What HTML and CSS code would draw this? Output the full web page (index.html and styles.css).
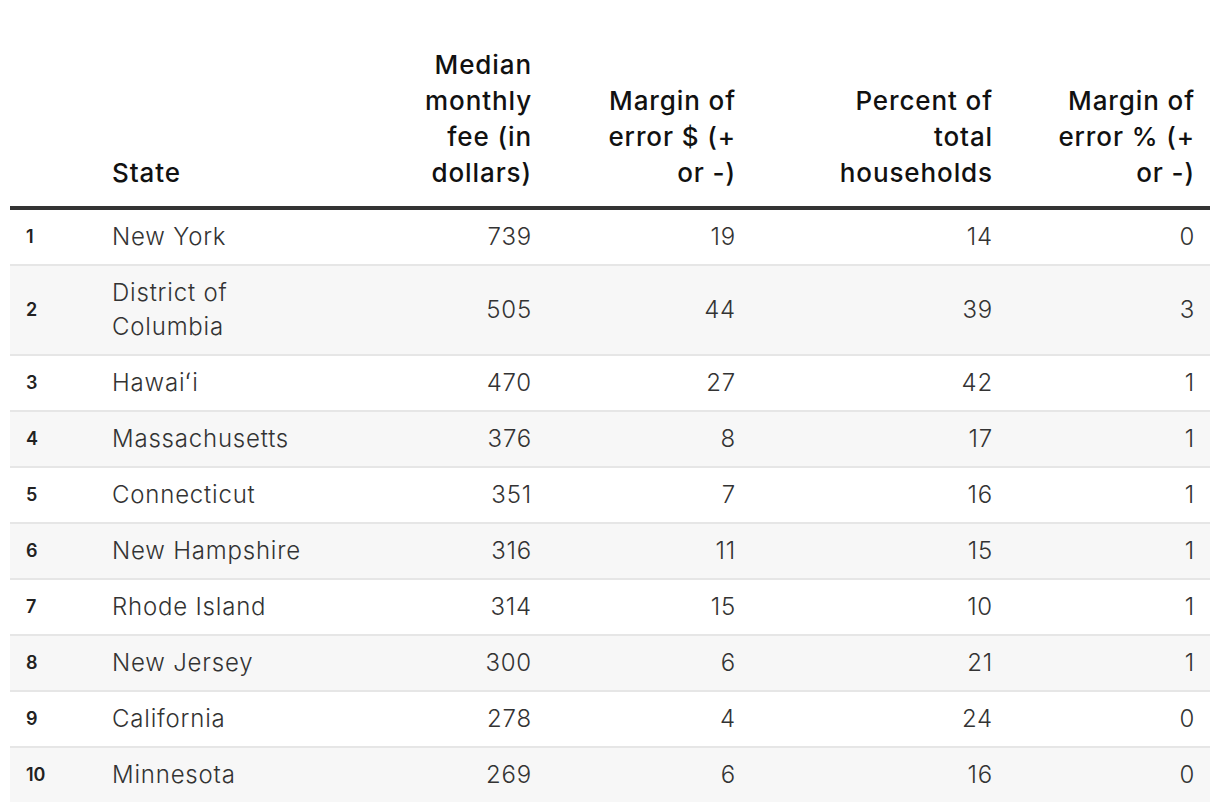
FILE: index.html
```html
<!DOCTYPE html>
<html lang="en">
<head>
<meta charset="utf-8">
<title>Median monthly fee by state</title>
<link rel="stylesheet" href="styles.css">
</head>
<body>
<table class="data">
  <colgroup>
    <col class="c-idx">
    <col class="c-state">
    <col class="c-fee">
    <col class="c-moe">
    <col class="c-pct">
    <col class="c-moep">
  </colgroup>
  <thead>
    <tr>
      <th class="idx"></th>
      <th class="left">State</th>
      <th>Median<br>monthly<br>fee (in<br>dollars)</th>
      <th>Margin of<br>error $ (+<br>or -)</th>
      <th>Percent of<br>total<br>households</th>
      <th>Margin of<br>error % (+<br>or -)</th>
    </tr>
  </thead>
  <tbody>
    <tr><td class="idx">1</td><td class="left">New York</td><td>739</td><td>19</td><td>14</td><td>0</td></tr>
    <tr><td class="idx">2</td><td class="left">District of<br>Columbia</td><td>505</td><td>44</td><td>39</td><td>3</td></tr>
    <tr><td class="idx">3</td><td class="left">Hawaiʻi</td><td>470</td><td>27</td><td>42</td><td>1</td></tr>
    <tr><td class="idx">4</td><td class="left">Massachusetts</td><td>376</td><td>8</td><td>17</td><td>1</td></tr>
    <tr><td class="idx">5</td><td class="left">Connecticut</td><td>351</td><td>7</td><td>16</td><td>1</td></tr>
    <tr><td class="idx">6</td><td class="left">New Hampshire</td><td>316</td><td>11</td><td>15</td><td>1</td></tr>
    <tr><td class="idx">7</td><td class="left">Rhode Island</td><td>314</td><td>15</td><td>10</td><td>1</td></tr>
    <tr><td class="idx">8</td><td class="left">New Jersey</td><td>300</td><td>6</td><td>21</td><td>1</td></tr>
    <tr><td class="idx">9</td><td class="left">California</td><td>278</td><td>4</td><td>24</td><td>0</td></tr>
    <tr><td class="idx">10</td><td class="left">Minnesota</td><td>269</td><td>6</td><td>16</td><td>0</td></tr>
  </tbody>
</table>
</body>
</html>
```

FILE: styles.css
```css
html, body {
  margin: 0;
  padding: 0;
  background: #ffffff;
}

body {
  padding: 37px 10px 0 10px;
  font-family: "Inter", "Liberation Sans", sans-serif;
  color: #333333;
}

.data {
  width: 1200px;
  border-collapse: collapse;
  table-layout: fixed;
}

.c-idx { width: 86px; }
.c-state { width: 240px; }
.c-fee { width: 211px; }
.c-moe { width: 204px; }
.c-pct { width: 257px; }
.c-moep { width: 202px; }

.data th {
  font-size: 26px;
  line-height: 36px;
  font-weight: 500;
  letter-spacing: 0.9px;
  color: #111111;
  text-align: right;
  vertical-align: bottom;
  padding: 10px 16px 15px 16px;
  border-bottom: 4px solid #333333;
}

.data td {
  font-size: 24px;
  line-height: 34px;
  font-weight: 300;
  letter-spacing: 0.8px;
  color: #333333;
  text-align: right;
  vertical-align: middle;
  padding: 10px 16px;
  border-bottom: 2px solid #e6e6e6;
}

.data th:not(.left):not(.idx),
.data td:not(.left):not(.idx) {
  padding-right: 15px;
}

.data tbody tr:nth-child(even) td {
  background: #f7f7f7;
}

.data tbody tr:last-child td {
  border-bottom: none;
}

.data .left {
  text-align: left;
}

.data td.idx {
  text-align: left;
  font-size: 18px;
  font-weight: 600;
  letter-spacing: 0;
  color: #222222;
}
```
